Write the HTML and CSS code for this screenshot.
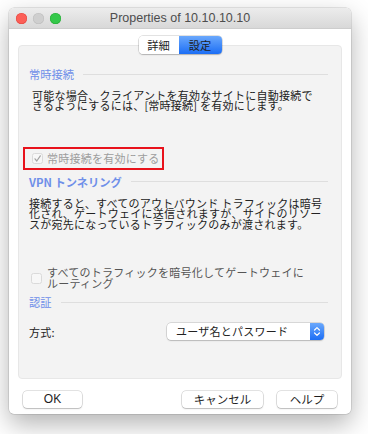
FILE: index.html
```html
<!DOCTYPE html>
<html lang="ja">
<head>
<meta charset="utf-8">
<title>Properties of 10.10.10.10</title>
<link rel="stylesheet" href="styles.css">
</head>
<body>
<div class="window">
  <div class="titlebar">
    <div class="lights">
      <span class="light red"></span>
      <span class="light grey"></span>
      <span class="light green"></span>
    </div>
    <div class="title">Properties of 10.10.10.10</div>
    <div></div>
  </div>
  <div class="content">
    <div class="tabs">
      <span class="tab">詳細</span>
      <span class="tab active">設定</span>
    </div>
    <div class="box">
      <div class="section-head"><span>常時接続</span><i></i></div>
      <p class="desc p1">可能な場合、クライアントを有効なサイトに自動接続で<br>きるようにするには、[常時接続] を有効にします。</p>
      <div class="check-row highlighted">
        <span class="checkbox checked">
          <svg width="11" height="11" viewBox="0 0 11 11"><path d="M3 5.8 L4.8 8 L8.3 2.8" fill="none" stroke="#a3a3a3" stroke-width="1.2" stroke-linecap="round" stroke-linejoin="round"/></svg>
        </span>
        <span class="check-label disabled">常時接続を有効にする</span>
      </div>
      <div class="section-head bold"><span>VPN トンネリング</span><i></i></div>
      <p class="desc p2">接続すると、すべてのアウトバウンド トラフィックは暗号<br>化され、ゲートウェイに送信されますが、サイトのリソー<br>スが宛先になっているトラフィックのみが渡されます。</p>
      <div class="check-row second">
        <span class="checkbox"></span>
        <span class="check-label dim">すべてのトラフィックを暗号化してゲートウェイに<br>ルーティング</span>
      </div>
      <div class="section-head"><span>認証</span><i></i></div>
      <div class="method-row">
        <span class="method-label">方式:</span>
        <div class="popup">
          <span class="popup-text">ユーザ名とパスワード</span>
          <span class="stepper">
            <svg width="14" height="15" viewBox="0 0 14 15"><path d="M4.6 6 L7 3.6 L9.4 6" fill="none" stroke="#fff" stroke-width="1.2" stroke-linecap="round" stroke-linejoin="round"/><path d="M4.6 9 L7 11.4 L9.4 9" fill="none" stroke="#fff" stroke-width="1.2" stroke-linecap="round" stroke-linejoin="round"/></svg>
          </span>
        </div>
      </div>
    </div>
    <div class="buttons">
      <button class="btn ok">OK</button>
      <button class="btn cancel">キャンセル</button>
      <button class="btn help">ヘルプ</button>
    </div>
  </div>
</div>
</body>
</html>
```

FILE: styles.css
```css
* { box-sizing: border-box; }
html, body { margin: 0; padding: 0; }
body {
  background: #ffffff;
  width: 368px;
  height: 434px;
  overflow: hidden;
  font-family: "Noto Sans CJK JP", "Noto Sans", sans-serif;
  color: #222;
}
.window {
  margin: 8px 0 0 9px;
  width: 342px;
  height: 406px;
  background: #fff;
  border-radius: 5px;
  box-shadow: 0 10px 26px rgba(0,0,0,0.30), 0 0 0 0.5px rgba(0,0,0,0.18);
  display: flex;
  flex-direction: column;
  overflow: hidden;
}
.titlebar {
  height: 21px;
  flex: none;
  background: linear-gradient(#ececec, #d8d8d8);
  border-bottom: 1px solid #cdcdcd;
  display: grid;
  grid-template-columns: 1fr auto 1fr;
  align-items: center;
  padding: 0 7px;
}
.lights { display: flex; gap: 6px; }
.light { width: 11px; height: 11px; border-radius: 50%; }
.red { background: #fc5f57; box-shadow: inset 0 0 0 0.5px #e2463f; }
.grey { background: #cfcfcf; box-shadow: inset 0 0 0 0.5px #bdbdbd; }
.green { background: #34c84a; box-shadow: inset 0 0 0 0.5px #27aa35; }
.title {
  font-family: "Liberation Sans", sans-serif;
  font-size: 12.5px;
  color: #4d4d4d;
}
.content {
  flex: 1;
  display: flex;
  flex-direction: column;
  padding: 7px 9px 6px;
}
.tabs {
  align-self: center;
  display: flex;
  height: 18px;
  border-radius: 4px;
  overflow: hidden;
  position: relative;
  z-index: 1;
  box-shadow: 0 0 0 0.5px rgba(0,0,0,0.22), 0 1px 1.5px rgba(0,0,0,0.18);
}
.tab {
  width: 40px;
  font-size: 11.25px;
  line-height: 18px;
  text-align: center;
  background: #fff;
  color: #1e1e1e;
}
.tab.active {
  width: 43px;
  background: linear-gradient(#6aa8fc, #1c6ef5);
}
.box {
  margin-top: -9px;
  height: 334px;
  flex: none;
  background: #f3f3f3;
  border: 1px solid #e7e7e7;
  border-radius: 4px;
  padding: 21px 13px 0 10px;
  display: flex;
  flex-direction: column;
}
.section-head {
  display: flex;
  align-items: center;
  gap: 9px;
  height: 14px;
  line-height: 14px;
  font-size: 11.25px;
  color: #6f8fe9;
}
.section-head.bold span { font-weight: 700; }
.section-head i {
  flex: 1;
  height: 1px;
  background: #dedede;
}
.desc {
  margin: 9px 0 0;
  font-size: 11px;
  letter-spacing: 0.25px;
  line-height: 10.4px;
  color: #222;
  white-space: nowrap;
}
.p1 { margin-left: 3px; }
.check-row {
  display: flex;
  align-items: center;
  align-self: flex-start;
}
.highlighted {
  margin-top: 36px;
  margin-left: -6px;
  height: 23px;
  border: 2px solid #e8121b;
  padding: 0 2px 0 7px;
  gap: 4px;
}
.second {
  margin-top: 38px;
  padding-left: 2px;
  gap: 5px;
}
.checkbox {
  width: 11px;
  height: 11px;
  flex: none;
  border-radius: 2.5px;
  background: #f7f7f7;
  border: 1px solid #dadada;
  display: flex;
}
.checkbox.checked svg { margin: -1px; }
.check-label {
  font-size: 11px;
  letter-spacing: 0.25px;
  line-height: 11px;
  white-space: nowrap;
}
.check-label.disabled { color: #9d9d9d; }
.check-label.dim { color: #555; }
.highlighted + .section-head { margin-top: 5px; }
.second + .section-head { margin-top: 6px; }
.method-row {
  margin-top: 14px;
  display: flex;
  justify-content: space-between;
  align-items: center;
  padding-right: 4px;
}
.method-label {
  font-size: 11px;
  letter-spacing: 0.25px;
  line-height: 12px;
  color: #222;
}
.popup {
  width: 157px;
  height: 17px;
  display: flex;
  background: #fff;
  border-radius: 4px;
  box-shadow: 0 0 0 0.5px rgba(0,0,0,0.22), 0 1px 1.5px rgba(0,0,0,0.15);
  overflow: hidden;
}
.popup-text {
  flex: 1;
  padding-left: 9px;
  font-size: 11px;
  letter-spacing: 0.25px;
  line-height: 17px;
  color: #222;
}
.stepper {
  width: 14px;
  height: 17px;
  display: flex;
  align-items: center;
  justify-content: center;
  background: linear-gradient(#6aa8fc, #1c6ef5);
}
.buttons {
  margin-top: 12px;
  display: flex;
  padding: 0 5px;
}
.btn {
  height: 17px;
  padding: 0;
  background: #fff;
  border: none;
  border-radius: 4px;
  box-shadow: 0 0 0 0.5px rgba(0,0,0,0.22), 0 1px 1.5px rgba(0,0,0,0.18);
  font-family: "Noto Sans CJK JP", sans-serif;
  font-size: 11.5px;
  line-height: 17px;
  color: #1e1e1e;
  text-align: center;
}
.ok { width: 59px; font-family: "Liberation Sans", sans-serif; font-size: 12px; }
.cancel { width: 81px; margin-left: auto; }
.help { width: 60px; margin-left: 14px; }
```
